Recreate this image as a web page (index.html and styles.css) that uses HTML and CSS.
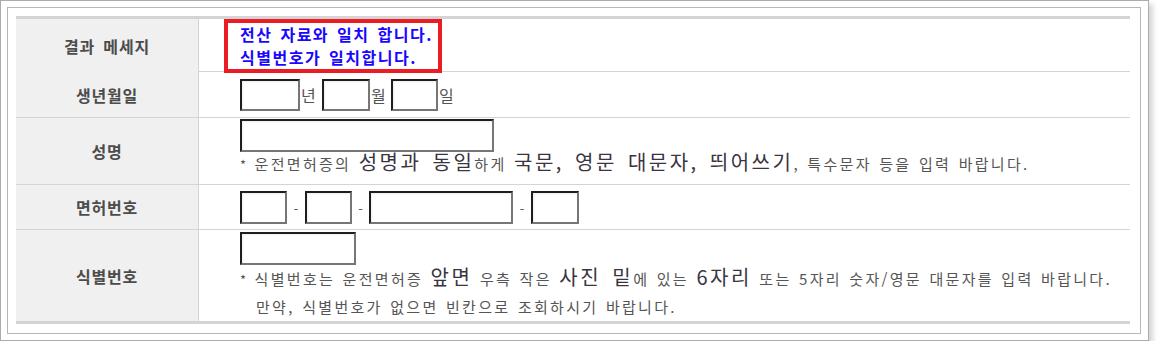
FILE: index.html
```html
<!DOCTYPE html>
<html lang="ko">
<head>
<meta charset="utf-8">
<title>운전면허 조회</title>
<link rel="stylesheet" href="styles.css">
</head>
<body>
<div class="outer">
  <div class="inner">
    <div class="tbl">
      <div class="row r1">
        <div class="th">결과 메세지</div>
        <div class="td td-msg">
          <div class="msg">
            <p>전산 자료와 일치 합니다.</p>
            <p>식별번호가 일치합니다.</p>
          </div>
        </div>
      </div>
      <div class="row r2">
        <div class="th">생년월일</div>
        <div class="td">
          <input class="inp w60 h32" type="text"><span class="unit u22">년</span><input class="inp w48 h32" type="text"><span class="unit u21">월</span><input class="inp w47 h32" type="text"><span class="unit">일</span>
        </div>
      </div>
      <div class="row r3">
        <div class="th">성명</div>
        <div class="td td-col td-r3">
          <input class="inp w254 h33" type="text">
          <p class="note"><span class="star">*</span> 운전면허증의 <span class="big">성명과 동일</span>하게 <span class="big">국문, 영문 대문자, 띄어쓰기</span>, 특수문자 등을 입력 바랍니다.</p>
        </div>
      </div>
      <div class="row r4">
        <div class="th">면허번호</div>
        <div class="td">
          <input class="inp w47 h33" type="text"><span class="dash d18">-</span><input class="inp w47 h33" type="text"><span class="dash d17">-</span><input class="inp w144 h33" type="text"><span class="dash d18">-</span><input class="inp w48 h33" type="text">
        </div>
      </div>
      <div class="row r5">
        <div class="th">식별번호</div>
        <div class="td td-col td-r5">
          <input class="inp w116 h33" type="text">
          <p class="note n27"><span class="star">*</span> 식별번호는 운전면허증 <span class="big">앞면</span> 우측 작은 <span class="big">사진 밑</span>에 있는 <span class="big">6자리</span> 또는 5자리 숫자/영문 대문자를 입력 바랍니다.</p>
          <p class="note n27 indent">만약, 식별번호가 없으면 빈칸으로 조회하시기 바랍니다.</p>
        </div>
      </div>
    </div>
  </div>
</div>
</body>
</html>
```
FILE: styles.css
```css
* { box-sizing: border-box; }
html, body { margin: 0; padding: 0; background: #fff; }
body { font-family: "Noto Sans CJK KR", "Noto Sans", sans-serif; }
p { margin: 0; }

.outer {
  width: 1149px;
  height: 341px;
  border: 1px solid #ababab;
  padding: 6px 7px 6px 6px;
  background: #fff;
  box-shadow: 4px 4px 5px rgba(0, 0, 0, 0.16);
}
.inner {
  height: 100%;
  border: 1px solid #b6b6b6;
  padding: 8px 9px 8px 8px;
}
.tbl {
  width: 1114px;
  border-top: 3px solid #d4d4d4;
  border-bottom: 3px solid #d4d4d4;
}
.row {
  display: grid;
  grid-template-columns: 183px 1fr;
  border-bottom: 1px solid #d4d4d4;
}
.row.r5 { border-bottom: 0; }
.r1 { height: 53px; }
.r2 { height: 46px; }
.r3 { height: 67px; }
.r4 { height: 45px; }
.r5 { height: 91px; }

.th {
  background: #f0f0f0;
  border-right: 1px solid #d4d4d4;
  display: flex;
  align-items: center;
  justify-content: center;
  font-size: 16px;
  font-weight: bold;
  letter-spacing: 0.8px;
  word-spacing: 3px;
  color: #4c4c4c;
}
.td {
  display: flex;
  align-items: center;
  padding-left: 41px;
  color: #555;
}
.td-msg { padding-left: 25px; align-items: stretch; }
.msg {
  width: 218px;
  border: 4px solid #ec1c24;
  padding-left: 12px;
  display: flex;
  flex-direction: column;
  justify-content: center;
  color: #1a06ff;
  font-weight: bold;
  font-size: 16px;
  line-height: 23px;
  letter-spacing: 1.5px;
  word-spacing: 2px;
  white-space: nowrap;
}
.td-col {
  flex-direction: column;
  align-items: flex-start;
  justify-content: flex-start;
}
.td-r3 { padding-top: 1px; }
.td-r5 { padding-top: 2px; }

.inp {
  display: block;
  margin: 0;
  padding: 0;
  border: 2px solid;
  border-color: #1e1e1e #767676 #767676 #1e1e1e;
  background: #fff;
  box-shadow: inset 1px 1px 2px rgba(0, 0, 0, 0.07);
  font: inherit;
  outline: none;
}
.h32 { height: 32px; }
.h33 { height: 33px; }
.w47 { width: 47px; }
.w48 { width: 48px; }
.w60 { width: 60px; }
.w116 { width: 116px; }
.w144 { width: 144px; }
.w254 { width: 254px; }

.unit {
  display: inline-block;
  font-size: 16px;
  color: #555;
  padding-left: 1px;
}
.u22 { width: 22px; }
.u21 { width: 21px; }
.dash {
  display: inline-block;
  text-align: center;
  font-size: 13px;
  color: #555;
  padding-top: 3px;
}
.d18 { width: 18px; }
.d17 { width: 17px; }

.note {
  font-size: 15px;
  line-height: 24px;
  letter-spacing: 2.3px;
  word-spacing: 1px;
  color: #555;
  white-space: nowrap;
}
.n27 { line-height: 27px; }
.note .big {
  font-size: 20px;
  line-height: 20px;
  letter-spacing: 2.5px;
  word-spacing: 3px;
  color: #3a3440;
}
.star { font-size: 13px; letter-spacing: 1px; }
.indent { padding-left: 16px; }
```
